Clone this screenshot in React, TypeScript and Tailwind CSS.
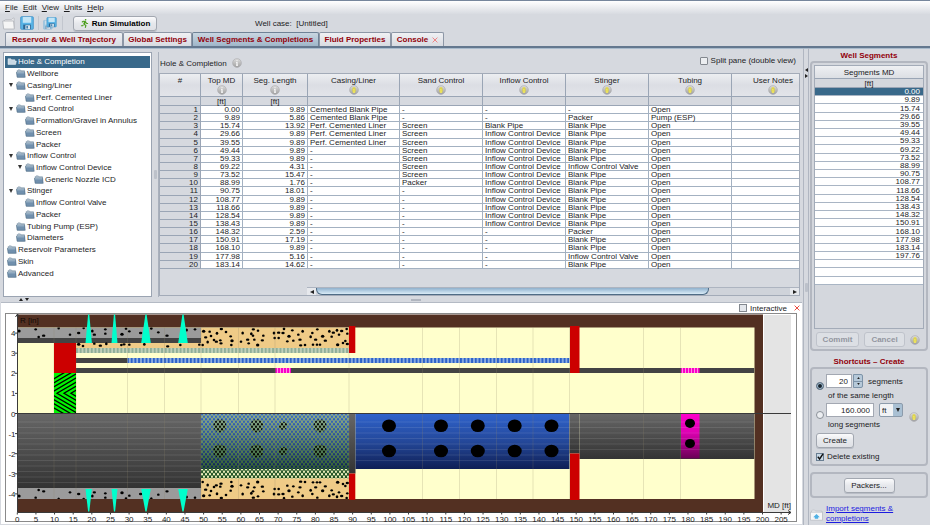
import React from "react";
import { FaRunning } from "react-icons/fa";

const TABS = [
  "Reservoir & Well Trajectory",
  "Global Settings",
  "Well Segments & Completions",
  "Fluid Properties",
  "Console",
];

const TREE: { label: string; level: number; open?: boolean }[] = [
  { label: "Hole & Completion", level: 0 },
  { label: "Wellbore", level: 1 },
  { label: "Casing/Liner", level: 1, open: true },
  { label: "Perf. Cemented Liner", level: 2 },
  { label: "Sand Control", level: 1, open: true },
  { label: "Formation/Gravel in Annulus", level: 2 },
  { label: "Screen", level: 2 },
  { label: "Packer", level: 2 },
  { label: "Inflow Control", level: 1, open: true },
  { label: "Inflow Control Device", level: 2, open: true },
  { label: "Generic Nozzle ICD", level: 3 },
  { label: "Stinger", level: 1, open: true },
  { label: "Inflow Control Valve", level: 2 },
  { label: "Packer", level: 2 },
  { label: "Tubing Pump (ESP)", level: 1 },
  { label: "Diameters", level: 1 },
  { label: "Reservoir Parameters", level: 0 },
  { label: "Skin", level: 0 },
  { label: "Advanced", level: 0 },
];

const INDENT = ["pl-[2px]", "pl-[11px]", "pl-[20px]", "pl-[29px]"];

const ICD = "Inflow Control Device";
const BP = "Blank Pipe";
const CBP = "Cemented Blank Pipe";
const PCL = "Perf. Cemented Liner";

const ROWS: string[][] = [
  ["0.00", "9.89", CBP, "-", "-", "-", "Open"],
  ["9.89", "5.86", CBP, "-", "-", "Packer", "Pump (ESP)"],
  ["15.74", "13.92", PCL, "Screen", BP, BP, "Open"],
  ["29.66", "9.89", PCL, "Screen", ICD, BP, "Open"],
  ["39.55", "9.89", PCL, "Screen", ICD, BP, "Open"],
  ["49.44", "9.89", "-", "Screen", ICD, BP, "Open"],
  ["59.33", "9.89", "-", "Screen", ICD, BP, "Open"],
  ["69.22", "4.31", "-", "Screen", ICD, "Inflow Control Valve", "Open"],
  ["73.52", "15.47", "-", "Screen", ICD, BP, "Open"],
  ["88.99", "1.76", "-", "Packer", ICD, BP, "Open"],
  ["90.75", "18.01", "-", "-", ICD, BP, "Open"],
  ["108.77", "9.89", "-", "-", ICD, BP, "Open"],
  ["118.66", "9.89", "-", "-", ICD, BP, "Open"],
  ["128.54", "9.89", "-", "-", ICD, BP, "Open"],
  ["138.43", "9.89", "-", "-", ICD, BP, "Open"],
  ["148.32", "2.59", "-", "-", "-", "Packer", "Open"],
  ["150.91", "17.19", "-", "-", "-", BP, "Open"],
  ["168.10", "9.89", "-", "-", "-", BP, "Open"],
  ["177.98", "5.16", "-", "-", "-", "Inflow Control Valve", "Open"],
  ["183.14", "14.62", "-", "-", "-", BP, "Open"],
];

const COLUMNS: { name: string; width: string; unit?: string; info: "gray" | "yellow" | null }[] = [
  { name: "#", width: "w-[41px]", info: null },
  { name: "Top MD", width: "w-[42px]", unit: "[ft]", info: "gray" },
  { name: "Seg. Length", width: "w-[65px]", unit: "[ft]", info: "gray" },
  { name: "Casing/Liner", width: "w-[92px]", info: "yellow" },
  { name: "Sand Control", width: "w-[83px]", info: "yellow" },
  { name: "Inflow Control", width: "w-[83px]", info: "yellow" },
  { name: "Stinger", width: "w-[83px]", info: "yellow" },
  { name: "Tubing", width: "w-[83px]", info: "yellow" },
  { name: "User Notes", width: "w-[83px]", info: "yellow" },
];

const SEGMENTS = [...ROWS.map((r) => r[0]), "197.76", "", "", ""];

const BUTTON =
  "flex items-center justify-center rounded-[3px] border border-[#a2a7b0] bg-linear-to-b from-[#fbfbfc] via-[#e6e8ec] to-[#dfe1e6] shadow-[0_1px_0_#b9bdc6]";

function Info({ tone }: { tone: "gray" | "yellow" }) {
  return (
    <svg viewBox="0 0 10 10" className="block size-[10px] shrink-0" aria-hidden="true">
      <defs>
        <linearGradient id={"info-" + tone} x1="0" y1="0" x2="0" y2="1">
          <stop offset="0" stopColor="#dcdcdc" />
          <stop offset="1" stopColor="#a0a0a0" />
        </linearGradient>
      </defs>
      <circle cx="5" cy="5" r="4.4" fill={"url(#info-" + tone + ")"} stroke="#aaaaac" strokeWidth="0.6" />
      {tone === "yellow" && <ellipse cx="5" cy="5" rx="1.8" ry="2.9" fill="#d8cf50" />}
      <path
        d="M5 2.3v1M4.2 4.5H5v2.7M4 7.3h2"
        stroke={tone === "yellow" ? "#f4ea62" : "#ffffff"}
        strokeWidth="1.1"
        fill="none"
      />
    </svg>
  );
}

function Folder({ selected }: { selected?: boolean }) {
  return (
    <svg viewBox="0 0 10 9" className="block h-[9px] w-[10px] shrink-0" aria-hidden="true">
      {selected ? (
        <path d="M1 7.4V1.8h2.8l.8 1h3.3v1.3H9.4L8.6 7.4z" fill="#c8d8e4" stroke="#eef4f8" strokeWidth="0.5" />
      ) : (
        <>
          <path d="M1.3 8V1.6L2 .9h2.3l.6.9h3.6V8z" fill="#b4c5d3" stroke="#5c7891" strokeWidth="0.5" />
          <path d="M.4 3.2h8.2L9.2 8.3H1.2z" fill="#7190ad" stroke="#48677f" strokeWidth="0.5" />
          <path d="M1 3.8h7.3" stroke="#b4c9da" strokeWidth="0.8" />
        </>
      )}
    </svg>
  );
}

function OpenIcon() {
  return (
    <svg viewBox="0 0 14 13" className="h-[13px] w-[14px]" aria-hidden="true">
      <path d="M2.5 11V3.4l1-.9h6L11 1h1.2v10z" fill="#e6e7ea" stroke="#b4b7be" strokeWidth="0.7" />
      <path d="M.7 4h10.8l.8 8H1.7z" fill="#f5f5f5" stroke="#a9acb3" strokeWidth="0.7" />
    </svg>
  );
}

function FloppyShape() {
  return (
    <>
      <path d="M.6 1.5Q.6.6 1.5.6h10q.9 0 .9.9v10q0 .9-.9.9h-10q-.9 0-.9-.9z" fill="#58b4e6" stroke="#3d8fc6" strokeWidth="0.7" />
      <path d="M2.6.9h7.8v5.4H2.6z" fill="#c3e5f6" />
      <path d="M3 8h7.2v4.2H3z" fill="#2a6594" />
      <path d="M5 8.6h4.4v3.6H5z" fill="#d7e6f0" />
      <path d="M6 9.2h1.3v2.4H6z" fill="#2d71a3" />
    </>
  );
}

function SaveIcon() {
  return (
    <svg viewBox="0 0 13 13" className="size-[14px]" aria-hidden="true">
      <FloppyShape />
    </svg>
  );
}

function SaveAllIcon() {
  return (
    <svg viewBox="0 0 14 13" className="h-[13px] w-[14px]" aria-hidden="true">
      <g transform="translate(0 3) scale(.74)" opacity="0.45">
        <FloppyShape />
      </g>
      <g transform="translate(3.4 0) scale(.8)">
        <FloppyShape />
      </g>
    </svg>
  );
}

function CrossIcon({ color }: { color: string }) {
  return (
    <svg viewBox="0 0 8 8" className="size-[6px]" aria-hidden="true">
      <path d="M.8.8l6.4 6.4M7.2.8L.8 7.2" stroke={color} strokeWidth="1.2" />
    </svg>
  );
}

function MenuBar() {
  return (
    <nav className="flex h-[14px] items-center gap-[5px] border-t border-[#76869c] bg-linear-to-b from-[#ffffff] to-[#d8dbe1] px-[5px]">
      {["File", "Edit", "View", "Units", "Help"].map((m) => (
        <button key={m} type="button">
          <span className="underline">{m[0]}</span>
          {m.slice(1)}
        </button>
      ))}
    </nav>
  );
}

function Toolbar() {
  return (
    <div className="flex h-[18px] items-center pl-[2px]">
      <button type="button" aria-label="Open" className="mr-[4px]"><OpenIcon /></button>
      <button type="button" aria-label="Save"><SaveIcon /></button>
      <span className="mx-[4px] h-[14px] w-px bg-[#c2c6ce]" />
      <button type="button" aria-label="Save all"><SaveAllIcon /></button>
      <span className="mx-[5px] h-[14px] w-px bg-[#c2c6ce]" />
      <button type="button" className={BUTTON + " ml-[5px] h-[15px] w-[84px] gap-[3px] font-bold text-black"}>
        <FaRunning className="size-[9px] text-[#4a9e1c]" />
        Run Simulation
      </button>
      <span className="ml-[98px]">Well case:&nbsp; [Untitled]</span>
    </div>
  );
}

function TabStrip() {
  const widths = ["w-[118px]", "w-[69px]", "w-[127px]", "w-[72px]", "w-[53px]"];
  return (
    <div role="tablist" className="flex h-[16px] shrink-0 items-stretch border-b-2 border-[#64788f] bg-[#d6d9df] pl-[5px] shadow-[0_1px_0_#a9bbcc]">
      {TABS.map((t, i) => (
        <button
          key={t}
          type="button"
          role="tab"
          aria-selected={i === 2}
          className={
            "flex items-center justify-center gap-[4px] rounded-t-[2px] border border-b-0 font-bold text-[#92000a] " +
            widths[i] +
            (i === 2
              ? " border-[#6f8296] bg-linear-to-b from-[#c9d6e1] to-[#9fb6c9]"
              : " border-[#8d97a6] bg-linear-to-b from-[#f0f1f4] to-[#d8dbe1]")
          }
        >
          {t}
          {t === "Console" && <CrossIcon color="#ee7777" />}
        </button>
      ))}
    </div>
  );
}

function Tree() {
  return (
    <aside className="w-[149px] shrink-0 border border-[#9ba4b2] bg-white px-px pt-[3px]">
      <ul className="grid h-[223px] auto-rows-fr">
        {TREE.map((n, i) => (
          <li
            key={i}
            className={
              "flex items-center " + INDENT[n.level] + (i === 0 ? " bg-[#39698a] text-white" : "")
            }
          >
            {n.open && (
              <span className="-ml-[9px] flex w-[9px] justify-center pr-px">
                <svg viewBox="0 0 4 4" className="size-[4px]" aria-hidden="true">
                  <path d="M0 0h4L2 4z" fill="#333" />
                </svg>
              </span>
            )}
            <Folder selected={i === 0} />
            <span className="ml-px whitespace-nowrap">{n.label}</span>
          </li>
        ))}
      </ul>
    </aside>
  );
}

function SegmentTable() {
  return (
    <section className="flex min-w-0 flex-1 flex-col border-l border-[#a9b0bc] pt-px pr-[3px] pb-px">
      <div className="flex h-[20px] items-center gap-[5px] pl-px">
        <span>Hole &amp; Completion</span>
        <Info tone="gray" />
        <label className="mb-[5px] ml-auto flex items-center gap-[3px] pr-[4px]">
          <input type="checkbox" className="size-[8px] appearance-none rounded-[1px] border border-[#83888f] bg-[#eceef1]" />
          Split pane (double view)
        </label>
      </div>
      <div className="flex min-h-0 flex-1 flex-col border border-[#a3abb8]">
        <div className="overflow-hidden">
          <table className="h-[195px] w-[655px] table-fixed border-separate border-spacing-0 leading-[7px]">
            <thead>
              <tr className="h-[23px]">
                {COLUMNS.map((c) => (
                  <th
                    key={c.name}
                    className={
                      "h-[23px] border-r border-b border-[#9aa5b5] bg-linear-to-b from-[#eceef1] via-[#dcdee4] to-[#e2e4e9] p-0 pt-[3px] align-top font-normal " +
                      c.width
                    }
                  >
                    <span className="flex flex-col items-center gap-px">
                      {c.name}
                      {c.info && <Info tone={c.info} />}
                    </span>
                  </th>
                ))}
              </tr>
              <tr className="h-[9px]">
                {COLUMNS.map((c) => (
                  <td key={c.name} className="h-[9px] border-r border-b border-[#9aa5b5] p-0 text-center">
                    {c.unit}
                  </td>
                ))}
              </tr>
            </thead>
            <tbody>
              {ROWS.map((r, i) => (
                <tr key={i}>
                  <td className="border-r border-b border-[#9aa5b5] p-0 pr-[2px] text-right">{i + 1}</td>
                  {[...r, ""].map((v, j) => (
                    <td
                      key={j}
                      className={
                        "border-r border-b border-[#a3b1c1] bg-white p-0 whitespace-nowrap " +
                        (j < 2 ? "pr-[2px] text-right" : "pl-[2px]")
                      }
                    >
                      {v}
                    </td>
                  ))}
                </tr>
              ))}
            </tbody>
          </table>
        </div>
        <div className="mt-auto ml-[147px] flex h-[8px] items-stretch border-t border-[#adb4c0] bg-[#cfd3da]">
          <button type="button" aria-label="Scroll left" className="flex w-[9px] items-center justify-center bg-[#e6e8ec]">
            <svg viewBox="0 0 4 4" className="size-[4px]"><path d="M4 0v4L0 2z" fill="#222" /></svg>
          </button>
          <div className="flex flex-1">
            <div className="w-[83%] rounded-b-[6px] border border-t-0 border-[#4f6c86] bg-linear-to-b from-[#8fb0cc] via-[#b5cfe3] to-[#d9ebf6]" />
          </div>
          <button type="button" aria-label="Scroll right" className="flex w-[9px] items-center justify-center bg-[#e6e8ec]">
            <svg viewBox="0 0 4 4" className="size-[4px]"><path d="M0 0v4l4-2z" fill="#222" /></svg>
          </button>
        </div>
      </div>
    </section>
  );
}

const SAND_DOTS = [
  [41, 94], [59, 95], [63, 108], [47, 112], [53, 126], [72, 120], [79, 125], [91, 121], [81, 100], [94, 87],
  [108, 96], [122, 109], [126, 122], [124, 135], [38, 135], [93, 130], [158, 99], [153, 125], [173, 119],
  [176, 130], [184, 101], [190, 88], [189, 107], [193, 119], [203, 135], [204, 92], [220, 107], [217, 121],
  [252, 99], [254, 114], [266, 98], [266, 114], [282, 86], [279, 99], [307, 91], [292, 124], [297, 109],
  [310, 122], [325, 104], [330, 119], [338, 94], [345, 135], [332, 136], [367, 99], [362, 110], [377, 119],
  [369, 134], [382, 88], [398, 109], [390, 134], [381, 134], [406, 122], [418, 94], [425, 110], [430, 98],
  [447, 104], [441, 91], [455, 93], [470, 87], [472, 101], [443, 134], [459, 129], [466, 123], [472, 132],
].map(([x, y]) => [190 + x / 3, 300 + y / 3]);

const CEMENT_DOTS = [
  [57, 93], [107, 88], [116, 111], [131, 107], [176, 84], [210, 104], [236, 99], [251, 84], [277, 93],
  [283, 104], [316, 88], [316, 101], [366, 103], [378, 86], [388, 94], [422, 99], [454, 85], [475, 97],
  [501, 107], [585, 88], [560, 90],
].map(([x, y]) => [x / 3, 300 + y / 3]);

const STRIP_DOTS = [
  [236, 133], [249, 138], [283, 131], [301, 137], [319, 131], [364, 135], [372, 133], [388, 134], [433, 133],
  [503, 139], [541, 135], [598, 134],
].map(([x, y]) => [x / 3, 300 + y / 3]);

const AXIS = 413.5;
const BOUNDARIES = [54, 76, 127.5, 164.5, 201, 238.5, 275, 349, 422.5, 459.5, 496.5, 533, 569.5, 643.5, 680.5];
const PERFS = [[88.7, 3.2], [114.5, 3], [146, 4.8], [183, 4.8]];

function Dots({ points, flip }: { points: number[][]; flip?: boolean }) {
  return (
    <g fill="#000">
      {points.map(([x, y], i) => (
        <ellipse key={i} cx={x} cy={flip ? 2 * AXIS - y : y} rx={i % 3 === 0 ? 1.7 : 1.3} ry={i % 4 === 0 ? 1.5 : 1.2} />
      ))}
    </g>
  );
}

function Ribs({ from, to, count }: { from: number; to: number; count: number }) {
  return (
    <g stroke="#ffffff" strokeOpacity="0.1">
      {Array.from({ length: count }, (_, i) => (
        <path key={i} d={`M${from} ${422 + i * 5.5}H${to}`} />
      ))}
    </g>
  );
}

function WellChart() {
  const ticks = Array.from({ length: 42 }, (_, i) => i * 5);
  return (
    <svg viewBox="1 313 801 211" className="block w-full" role="img" aria-label="Well completion schematic">
      <defs>
        <linearGradient id="steel" x1="0" y1="0" x2="0" y2="1">
          <stop offset="0" stopColor="#676767" /><stop offset="1" stopColor="#333333" />
        </linearGradient>
        <linearGradient id="blue" x1="0" y1="0" x2="0" y2="1">
          <stop offset="0" stopColor="#2f63cc" /><stop offset="0.5" stopColor="#24489a" /><stop offset="1" stopColor="#0f1f55" />
        </linearGradient>
        <linearGradient id="pink" x1="0" y1="0" x2="0" y2="1">
          <stop offset="0" stopColor="#ff00cc" /><stop offset="0.4" stopColor="#e000b4" /><stop offset="1" stopColor="#6a0055" />
        </linearGradient>
        <linearGradient id="meshTone" x1="0" y1="0" x2="0" y2="1">
          <stop offset="0" stopColor="#8cab8c" /><stop offset="0.6" stopColor="#4f7a50" /><stop offset="1" stopColor="#1d4f20" />
        </linearGradient>
        <pattern id="holes" width="4" height="5" patternUnits="userSpaceOnUse" x="201" y="413">
          <rect width="4" height="5" fill="#fff" />
          <ellipse cx="1" cy="1.2" rx="0.9" ry="1.3" fill="#000" />
          <ellipse cx="3" cy="3.7" rx="0.9" ry="1.3" fill="#000" />
        </pattern>
        <mask id="meshMask" maskUnits="userSpaceOnUse" x="201" y="413" width="149" height="66">
          <rect x="201" y="413" width="149" height="66" fill="url(#holes)" />
        </mask>
        <pattern id="blueBars" width="3.7" height="5" patternUnits="userSpaceOnUse" x="127">
          <rect width="3.7" height="5" fill="#94b4e4" /><rect width="2" height="5" fill="#2c62c8" />
        </pattern>
        <pattern id="greenBars" width="3.7" height="5" patternUnits="userSpaceOnUse" x="76">
          <rect width="3.7" height="5" fill="#c5d3bd" /><rect width="2" height="5" fill="#8faf98" />
        </pattern>
        <pattern id="pinkBars" width="3" height="5" patternUnits="userSpaceOnUse" x="275">
          <rect width="3" height="5" fill="#ff8ce4" /><rect width="2" height="5" fill="#fa00c8" />
        </pattern>
        <clipPath id="pumpClip"><rect x="54" y="373" width="22" height="40.5" /></clipPath>
        <clipPath id="plotClip"><rect x="17.5" y="327.5" width="737" height="171.5" /></clipPath>
      </defs>

      <rect x="5.5" y="313.5" width="791" height="208" fill="#fff" stroke="#8a8a8a" />
      <rect x="764" y="315" width="27" height="197" fill="#e4e4e4" />
      <rect x="17.5" y="314.5" width="745.5" height="197.5" fill="#533022" />
      <rect x="17.5" y="327.5" width="737" height="171.5" fill="#ffffcc" />

      {/* casing, cement and gravel above the axis */}
      <g clipPath="url(#plotClip)">
        <rect x="17.5" y="327.5" width="183.5" height="10.5" fill="#9b9b9b" />
        <rect x="17.5" y="338" width="183.5" height="5" fill="#434343" />
        <rect x="76" y="343" width="125" height="5" fill="#efcb87" />
        <rect x="201" y="327.5" width="148" height="20.5" fill="#efcb87" />
        <Dots points={CEMENT_DOTS} />
        <Dots points={STRIP_DOTS} />
        <Dots points={SAND_DOTS} />
        <rect x="76" y="348" width="273" height="5" fill="url(#greenBars)" />
        <rect x="76" y="358" width="51.5" height="5" fill="#434343" />
        <rect x="127.5" y="358" width="442" height="5" fill="url(#blueBars)" />
        <rect x="76" y="368" width="678.5" height="5" fill="#434343" />
        <rect x="275.5" y="368" width="15.5" height="5" fill="url(#pinkBars)" />
        <rect x="681" y="368" width="18.5" height="5" fill="url(#pinkBars)" />

        {/* outer views below the axis */}
        <rect x="17.5" y={AXIS} width="183.5" height="74.5" fill="url(#steel)" />
        <rect x="17.5" y="488" width="183.5" height="11" fill="#9b9b9b" />
        <Dots points={CEMENT_DOTS} flip />
        <rect x="201" y={AXIS} width="148" height="55.5" fill="url(#blue)" />
        {[[219.8, 6.6], [256.7, 6.6], [283, 4], [320, 6.6]].map(([x, r]) => (
          <g key={x}><circle cx={x} cy="425.8" r={r} /><circle cx={x} cy="451" r={r} /></g>
        ))}
        <rect x="201" y={AXIS} width="148" height="65" fill="url(#meshTone)" mask="url(#meshMask)" />
        <rect x="201" y="478.5" width="148" height="20.5" fill="#efcb87" />
        <Dots points={SAND_DOTS} flip />
        <rect x="349" y={AXIS} width="6.5" height="60" fill="url(#steel)" />
        <rect x="355.5" y={AXIS} width="214" height="55.5" fill="url(#blue)" />
        <rect x="569.5" y={AXIS} width="10" height="40" fill="url(#steel)" />
        <rect x="579.5" y={AXIS} width="175" height="45.5" fill="url(#steel)" />
        <rect x="681" y={AXIS} width="18.5" height="45" fill="url(#pink)" />
        <Ribs from={17.5} to={201} count={12} />
        <Ribs from={355.5} to={569.5} count={8} />
        <Ribs from={569.5} to={754} count={6} />
        {BOUNDARIES.map((x) => (
          <path key={x} d={`M${x} 327.5V499`} stroke="#8c8468" strokeOpacity="0.22" />
        ))}
      </g>
      {[389, 441, 477.8, 514.7, 551.5].map((x) => (
        <g key={x}><ellipse cx={x} cy="425.8" rx="7" ry="6.3" /><ellipse cx={x} cy="451" rx="7" ry="6.3" /></g>
      ))}
      <ellipse cx="690" cy="423.3" rx="5" ry="4.6" />
      <ellipse cx="690" cy="443.5" rx="5" ry="4.6" />

      {/* packers and pump */}
      <g fill="#cc0000">
        <rect x="54" y="343" width="22" height="30" />
        <rect x="349" y="326" width="6.3" height="27" />
        <rect x="349" y="473.5" width="6.3" height="26.3" />
        <rect x="570" y="326" width="9.5" height="47" />
        <rect x="570" y="453.5" width="9.5" height="46.5" />
      </g>
      <rect x="54" y="373" width="22" height="40.5" fill="#00f500" />
      <g clipPath="url(#pumpClip)" stroke="#000" strokeWidth="1.3" fill="none">
        {[-27, -20, -13, -6, 1, 8, 15].map((d) => (
          <path key={d} d={`M${56 + d + 44} 367.5L${56 + d} 393.3L${56 + d + 44} 419`} />
        ))}
      </g>
      <g fill="#00ffcc">
        {PERFS.map(([x, w]) => (
          <g key={x}>
            <path d={`M${x - 0.6} 314.5h1.2L${x + w} 343H${x - w}z`} />
            <path d={`M${x - w} 489H${x + w}L${x + 0.6} 511.5h-1.2z`} />
          </g>
        ))}
      </g>

      {/* axes */}
      <g stroke="#3a3a3a" fill="none">
        <path d="M17.5 314V512.5H791" />
        <path d={`M17.5 ${AXIS}H791`} />
        <path d="M788 510.5l3 2l-3 2" />
        <path d="M15.5 317l2-3l2 3" />
        {ticks.map((t) => (
          <path key={t} d={`M${17.3 + t * 3.726} 512.5v2`} />
        ))}
        {[4, 3, 2, 1, 0, -1, -2, -3, -4].map((v) => (
          <path key={v} d={`M15 ${AXIS - v * 20.1}h2.5`} />
        ))}
      </g>
      <g fontSize="8" fill="#222">
        {ticks.map((t) => (
          <text key={t} x={17.3 + t * 3.726} y="521.5" textAnchor="middle">{t}</text>
        ))}
        {[4, 3, 2, 1, 0, -1, -2, -3, -4].map((v) => (
          <text key={v} x="15.5" y={AXIS - v * 20.1 + 3} textAnchor="end">{v}</text>
        ))}
        <text x="20" y="322.5" fill="#120a06">R [in]</text>
        <text x="791" y="507.5" textAnchor="end">MD [ft]</text>
      </g>
    </svg>
  );
}

function ChartPanel() {
  return (
    <section className="mr-px ml-px border-t border-[#b4bac4] bg-white">
      <div className="flex h-[10px] items-center justify-end gap-[7px] pr-[2px]">
        <label className="flex items-center gap-[3px]">
          <input type="checkbox" className="size-[8px] appearance-none border border-[#83888f] bg-[#e4e7ec]" />
          Interactive
        </label>
        <button type="button" aria-label="Close"><CrossIcon color="#e8382a" /></button>
      </div>
      <WellChart />
    </section>
  );
}

const GROUP = "rounded-[4px] border-2 border-[#b3b7c0] bg-[#d4d7dd]";
const FIELD = "h-[14px] border border-[#a3a8b2] bg-white pr-[3px] text-right";

function RightPanel() {
  return (
    <aside className="w-[122px] shrink-0 border-l border-[#b0b6c1] pt-[3px] pr-[2px] pl-px">
      <h2 className="text-center leading-[10px] font-bold text-[#92000a]">Well Segments</h2>
      <div className={GROUP + " h-[290px] px-[2px] pt-[2px]"}>
        <div className="h-[264px] border border-[#a3abb8]">
          <table className="h-[219px] w-full border-separate border-spacing-0 leading-[7px]">
            <thead>
              <tr>
                <th className="h-[13px] border-b border-[#9aa5b5] bg-linear-to-b from-[#eff0f3] to-[#dcdfe4] p-0 font-normal">Segments MD</th>
              </tr>
              <tr>
                <td className="h-[9px] border-b border-[#9aa5b5] p-0 text-center">[ft]</td>
              </tr>
            </thead>
            <tbody>
              {SEGMENTS.map((s, i) => (
                <tr key={i} className={i === 0 ? "bg-[#39698a] text-white" : "bg-white"}>
                  <td className="border-b border-[#a9b5c4] p-0 pr-[3px] text-right">{s || "\u00a0"}</td>
                </tr>
              ))}
            </tbody>
          </table>
        </div>
        <div className="mt-[3px] flex items-center gap-[5px] pl-[2px] font-bold text-[#9396a0]">
          <button type="button" disabled className="h-[15px] w-[43px] rounded-[3px] border border-[#bfc3cb] bg-[#dcdfe4]">Commit</button>
          <button type="button" disabled className="h-[15px] w-[41px] rounded-[3px] border border-[#bfc3cb] bg-[#dcdfe4]">Cancel</button>
          <Info tone="yellow" />
        </div>
      </div>

      <h2 className="mt-[6px] text-center leading-[10px] font-bold text-[#92000a]">Shortcuts – Create</h2>
      <div className={GROUP + " h-[99px] px-[4px] pt-[5px]"}>
        <div className="flex">
          <div className="flex-1">
            <div className="flex h-[14px] items-center">
              <input type="radio" name="mode" id="by-count" defaultChecked className="mt-[10px] mr-[2px] size-[8px] shrink-0 appearance-none rounded-full border border-[#6c7f92] bg-white shadow-[inset_0_0_0_1px_#a9c4d8] checked:bg-[#17222c]" />
              <input aria-label="Number of segments" defaultValue="20" className={FIELD + " w-[26px]"} />
              <span className="ml-px flex h-[14px] w-[10px] flex-col overflow-hidden rounded-r-[2px] border border-[#7d93a8] bg-[#b6c9d9]">
                <button type="button" aria-label="Increase" className="flex flex-1 items-center justify-center border-b border-[#7d93a8]">
                  <svg viewBox="0 0 4 3" className="h-[2px] w-[3px]"><path d="M0 3h4L2 0z" fill="#222" /></svg>
                </button>
                <button type="button" aria-label="Decrease" className="flex flex-1 items-center justify-center">
                  <svg viewBox="0 0 4 3" className="h-[2px] w-[3px]"><path d="M0 0h4L2 3z" fill="#222" /></svg>
                </button>
              </span>
              <span className="ml-[5px]">segments</span>
            </div>
            <label htmlFor="by-count" className="block pl-[12px] leading-[15px]">of the same length</label>
            <div className="flex h-[14px] items-center">
              <input type="radio" name="mode" id="by-length" className="mt-[10px] mr-[2px] size-[8px] shrink-0 appearance-none rounded-full border border-[#8a9098] bg-[#eceef1]" />
              <input aria-label="Segment length" defaultValue="160.000" className={FIELD + " w-[48px]"} />
              <span className="relative ml-[5px] flex">
                <select aria-label="Unit" className="h-[14px] w-[24px] appearance-none rounded-[2px] border border-[#8c9bab] bg-linear-to-r from-[#f1f3f5] from-60% to-[#a9c0d3] to-60% pl-[2px]">
                  <option>ft</option>
                </select>
                <svg viewBox="0 0 4 4" className="pointer-events-none absolute top-[5px] right-[3px] size-[4px]"><path d="M0 0h4L2 4z" fill="#222" /></svg>
              </span>
            </div>
            <label htmlFor="by-length" className="block pl-[12px] leading-[15px]">long segments</label>
          </div>
          <span className="-ml-[12px] flex items-end pr-[3px] pb-[10px]"><Info tone="yellow" /></span>
        </div>
        <button type="button" className={BUTTON + " mt-px h-[15px] w-[38px]"}>Create</button>
        <label className="mt-[4px] flex items-center gap-[3px]">
          <span className="relative flex">
            <input type="checkbox" defaultChecked className="size-[8px] appearance-none border border-[#6a7f93] bg-[#c9d9e6]" />
            <svg viewBox="0 0 8 8" className="pointer-events-none absolute inset-0 size-[8px]">
              <path d="M1.8 3.8l1.8 2.2L7 .8" stroke="#111" strokeWidth="1.4" fill="none" />
            </svg>
          </span>
          Delete existing
        </label>
      </div>

      <div className={GROUP + " mt-[6px] flex h-[26px] items-center justify-center"}>
        <button type="button" className={BUTTON + " h-[15px] w-[51px]"}>Packers...</button>
      </div>
      <div className="mt-[6px] flex items-center gap-[3px] leading-[10px]">
        <svg viewBox="0 0 13 13" className="size-[13px] shrink-0" aria-hidden="true">
          <path d="M1.5 11V3l1-1h2l1 1H12v8z" fill="#e7e9ec" stroke="#b9bcc3" strokeWidth="0.6" />
          <path d="M.5 4.2h12v8H.5z" fill="#f6f7f8" stroke="#adb1b8" strokeWidth="0.6" />
          <path d="M6.5 6l3.3 3.2H8.2v1.6H4.8V9.2H3.2z" fill="#4fb0e4" />
        </svg>
        <a href="#import" className="text-[#1c1ce0] underline">Import segments &amp;<br />completions</a>
      </div>
    </aside>
  );
}

export default function App() {
  return (
    <div className="flex min-h-screen flex-col overflow-hidden bg-[#d6d9df] font-['Liberation_Sans',Arial,sans-serif] text-[8px] leading-[9px] text-[#1c1c1e]">
      <MenuBar />
      <Toolbar />
      <TabStrip />
      <main className="flex flex-1">
        <div className="flex min-w-0 flex-1 flex-col pt-[4px]">
          <div className="flex h-[245px] pl-[3px]">
            <Tree />
            <div className="flex w-[6px] shrink-0 items-center justify-center">
              <span className="h-[9px] w-[3px] rounded-[1px] bg-[#bcc1ca]" />
            </div>
            <SegmentTable />
          </div>
          <div className="flex h-[5px] items-center pl-[19px]">
            <svg viewBox="0 0 10 3" className="h-[3px] w-[10px]" aria-hidden="true">
              <path d="M0 3h4L2 0zM6 0h4L8 3z" fill="#222" />
            </svg>
            <span className="mx-auto h-[2px] w-[10px] bg-[#b0b5bf]" />
          </div>
          <ChartPanel />
        </div>
        <div className="flex w-[5px] shrink-0 flex-col items-center border-l border-[#b0b6c1] pt-[20px]">
          <svg viewBox="0 0 3 10" className="h-[10px] w-[3px]" aria-hidden="true">
            <path d="M3 0v4L0 2zM0 6v4l3-2z" fill="#222" />
          </svg>
          <span className="mt-[205px] h-[9px] w-[3px] rounded-[1px] bg-[#bcc1ca]" />
        </div>
        <RightPanel />
      </main>
    </div>
  );
}
